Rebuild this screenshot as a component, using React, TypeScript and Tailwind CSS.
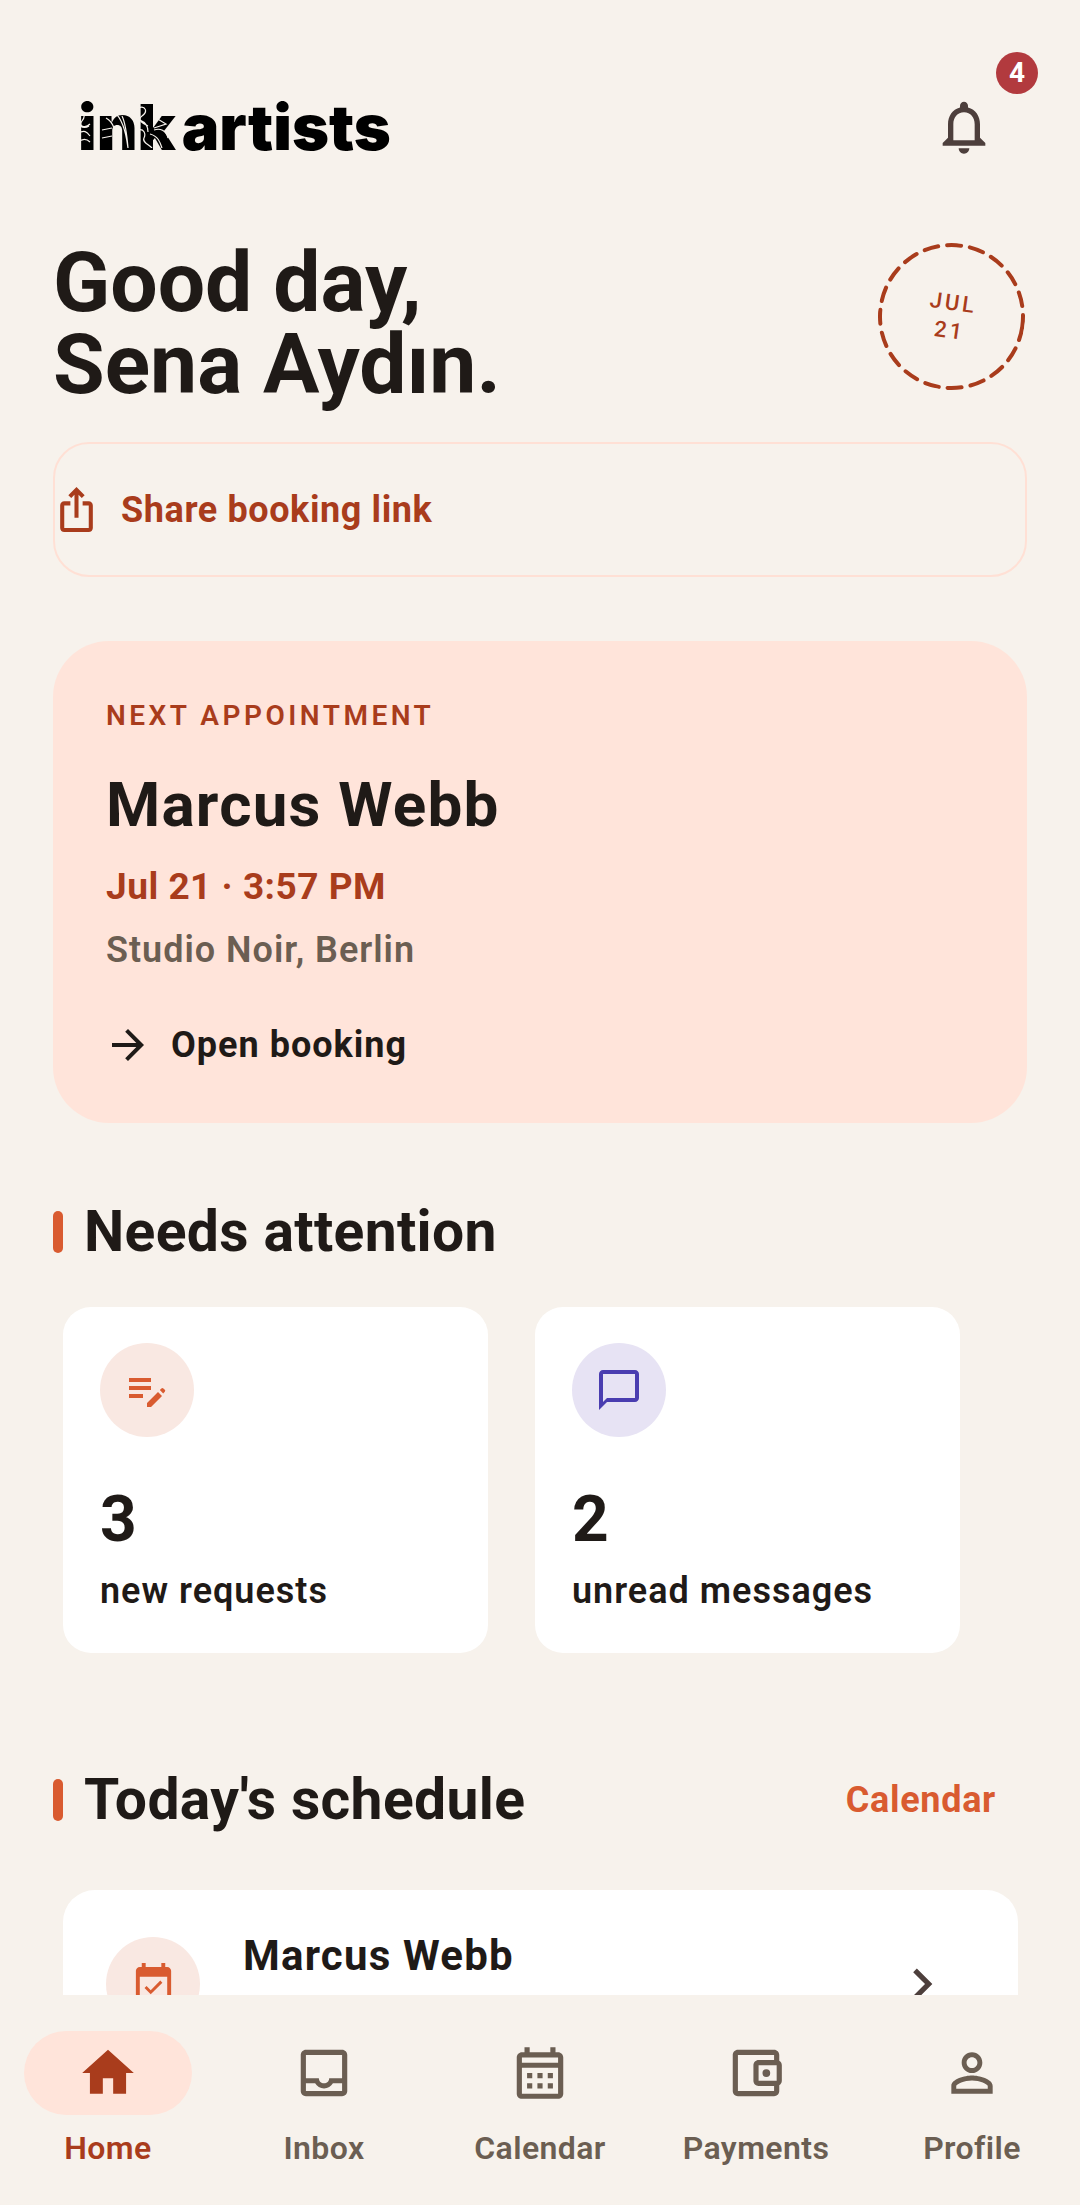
import type { ReactNode } from 'react';

const ICONS = {
  bell: 'M12 22c1.1 0 2-.9 2-2h-4c0 1.1.9 2 2 2zm6-6v-5c0-3.07-1.63-5.64-4.5-6.32V4c0-.83-.67-1.5-1.5-1.5s-1.5.67-1.5 1.5v.68C7.64 5.36 6 7.92 6 11v5l-2 2v1h16v-1l-2-2zm-2 1H8v-6c0-2.48 1.51-4.5 4-4.5s4 2.02 4 4.5v6z',
  share: 'M16 5l-1.42 1.42-1.59-1.59V16h-1.98V4.83L9.42 6.42 8 5l4-4 4 4zm4 5v11c0 1.1-.9 2-2 2H6c-1.11 0-2-.9-2-2V10c0-1.11.89-2 2-2h3v2H6v11h12V10h-3V8h3c1.1 0 2 .89 2 2z',
  arrow: 'M12 4l-1.41 1.41L16.17 11H4v2h12.17l-5.58 5.59L12 20l8-8z',
  editNote: 'M3 10h11v2H3zM3 6h11v2H3zM3 14h7v2H3zM12 20.5v-2L17.5 13l2 2-5.5 5.5zM18.4 12l.8-.8a.7.7 0 0 1 1 0l.7.7a.7.7 0 0 1 0 1l-.8.8z',
  chat: 'M20 2H4c-1.1 0-2 .9-2 2v18l4-4h14c1.1 0 2-.9 2-2V4c0-1.1-.9-2-2-2zm0 14H6l-2 2V4h16v12z',
  event: 'M16.53 11.06L15.47 10l-4.88 4.88-2.12-2.12-1.06 1.06L10.59 17l5.94-5.94zM19 3h-1V1h-2v2H8V1H6v2H5c-1.11 0-1.99.9-1.99 2L3 19c0 1.1.89 2 2 2h14c1.1 0 2-.9 2-2V5c0-1.1-.9-2-2-2zm0 16H5V8h14v11z',
  chevron: 'M10 6L8.59 7.41 13.17 12l-4.58 4.59L10 18l6-6z',
  home: 'M10 20v-6h4v6h5v-8h3L12 3 2 12h3v8z',
  inbox: 'M19 3H5c-1.1 0-2 .9-2 2v14c0 1.1.9 2 2 2h14c1.1 0 2-.9 2-2V5c0-1.1-.9-2-2-2zm0 16H5v-3h3.56c.69 1.19 1.97 2 3.45 2s2.75-.81 3.45-2H19v3zm0-5h-4.99c0 1.1-.9 2-2 2s-2-.9-2-2H5V5h14v9z',
  calendar: 'M19 4h-1V2h-2v2H8V2H6v2H5c-1.1 0-2 .9-2 2v14c0 1.1.9 2 2 2h14c1.1 0 2-.9 2-2V6c0-1.1-.9-2-2-2zm0 16H5V10h14v10zm0-12H5V6h14v2zM7 12h2v2H7zm4 0h2v2h-2zm4 0h2v2h-2zm-8 4h2v2H7zm4 0h2v2h-2zm4 0h2v2h-2z',
  wallet: 'M21 7.28V5c0-1.1-.9-2-2-2H5c-1.11 0-2 .9-2 2v14c0 1.1.89 2 2 2h14c1.1 0 2-.9 2-2v-2.28c.59-.35 1-.98 1-1.72V9c0-.74-.41-1.38-1-1.72zM20 9v6h-7V9h7zM5 19V5h14v2h-6c-1.1 0-2 .9-2 2v6c0 1.1.9 2 2 2h6v2H5zm11-8.5a1.5 1.5 0 1 0 0 3 1.5 1.5 0 0 0 0-3z',
  person: 'M12 5.9c1.16 0 2.1.94 2.1 2.1s-.94 2.1-2.1 2.1S9.9 9.16 9.9 8s.94-2.1 2.1-2.1m0 9c2.97 0 6.1 1.46 6.1 2.1v1.1H5.9V17c0-.64 3.13-2.1 6.1-2.1M12 4C9.79 4 8 5.79 8 8s1.79 4 4 4 4-1.79 4-4-1.79-4-4-4zm0 9c-2.67 0-8 1.34-8 4v3h16v-3c0-2.66-5.33-4-8-4z',
};

function Icon({ d, className }: { d: string; className: string }) {
  return (
    <svg viewBox="0 0 24 24" fill="currentColor" className={`shrink-0 ${className}`}>
      <path d={d} />
    </svg>
  );
}

function Logo() {
  return (
    <div className="flex items-baseline font-['Inter',sans-serif] text-[63px] leading-[60px] font-black text-black">
      <span className="relative mr-[6px]">
        ink
        <svg viewBox="0 0 100 44" fill="none" className="absolute bottom-[9px] left-0 h-[44px] w-[100px]" stroke="#f7f2ec" strokeWidth="1.2">
          <path d="M0 10c6-4 8 2 4 7s3 8 8 3M0 30c6-5 9-2 12 2M0 38c5-4 9-3 12 0M2 22c3 2 6 2 9 0" />
          <path d="M28 14c8 4 10 14 12 30M36 8c8 6 12 20 14 36M24 26l10-2M24 34l10-2M44 12c4 8 5 20 6 32" />
          <path d="M60 4c8-3 10 4 4 8s2 8 6 10M60 26c6-2 8 4 6 8s4 6 8 10M72 30c8 2 10 8 12 14M78 14l10 6-12 4M76 26c6-2 12 0 14 8M62 16c5 2 8 6 8 12" />
        </svg>
      </span>
      <span>artists</span>
    </div>
  );
}

function SectionTitle({ children }: { children: ReactNode }) {
  return (
    <div className="flex items-center gap-[21px]">
      <div className="h-[42px] w-[10px] rounded-full bg-[#d95b30]" />
      <h2 className="text-[57px] leading-[66px] font-bold tracking-[0.35px] text-[#1f1a17]">{children}</h2>
    </div>
  );
}

function AttentionCard({ icon, circle, iconColor, count, label }: { icon: string; circle: string; iconColor: string; count: string; label: string }) {
  return (
    <div className="h-[346px] w-[425px] rounded-[28px] bg-white px-[37px] pt-[36px]">
      <div className={`flex h-[94px] w-[94px] items-center justify-center rounded-full ${circle}`}>
        <Icon d={icon} className={`h-[48px] w-[48px] ${iconColor}`} />
      </div>
      <div className="mt-[45px] text-[64px] leading-[75px] font-bold text-[#1f1a17]">{count}</div>
      <div className="mt-[13px] text-[36px] leading-[42px] font-semibold tracking-[1px] text-[#1f1a17]">{label}</div>
    </div>
  );
}

const NAV_ITEMS = [
  { label: 'Home', icon: ICONS.home, active: true },
  { label: 'Inbox', icon: ICONS.inbox, active: false },
  { label: 'Calendar', icon: ICONS.calendar, active: false },
  { label: 'Payments', icon: ICONS.wallet, active: false },
  { label: 'Profile', icon: ICONS.person, active: false },
];

function BottomNav() {
  return (
    <nav className="flex h-[210px] shrink-0 bg-[#f7f2ec] px-0 pt-[36px]">
      {NAV_ITEMS.map((item) => (
        <div key={item.label} className="flex w-[216px] flex-col items-center">
          <div className={`flex h-[84px] w-[168px] items-center justify-center rounded-full ${item.active ? 'bg-[#ffe4da] text-[#a93c1c]' : 'text-[#6b5e52]'}`}>
            <Icon d={item.icon} className="h-[62px] w-[62px]" />
          </div>
          <span className={`mt-[13px] text-[32px] leading-[40px] font-semibold tracking-[0.4px] ${item.active ? 'text-[#a93c1c]' : 'text-[#6b5e52]'}`}>{item.label}</span>
        </div>
      ))}
    </nav>
  );
}

export default function App() {
  return (
    <div className="flex h-[2205px] w-[1080px] flex-col overflow-hidden bg-[#f7f2ec] font-['Roboto',sans-serif]">
      <main className="min-h-0 flex-1 overflow-hidden">
        <header className="relative flex h-[160px] items-center justify-between pt-[94px] pr-[84px] pl-[78px]">
          <Logo />
          <Icon d={ICONS.bell} className="h-[64px] w-[64px] text-[#4d3f3c]" />
          <span className="absolute top-[52px] right-[42px] flex h-[42px] w-[42px] items-center justify-center rounded-full bg-[#b23a3e] text-[28px] font-bold text-white">4</span>
        </header>

        <section className="flex items-start justify-between pr-[55px] pl-[53px]">
          <h1 className="mt-[82px] text-[84px] leading-[82px] font-bold text-[#1f1a17]">
            Good day,
            <br />
            Sena Aydın.
          </h1>
          <div className="relative mt-[83px] flex h-[147px] w-[147px] rotate-[8deg] flex-col items-center justify-center text-[22px] leading-[28px] font-medium tracking-[3px] text-[#a93c1c]">
            <svg viewBox="0 0 147 147" fill="none" className="absolute inset-0 h-[147px] w-[147px]">
              <circle cx="73.5" cy="73.5" r="71.5" stroke="currentColor" strokeWidth="4" strokeLinecap="round" strokeDasharray="14 9" />
            </svg>
            <span>JUL</span>
            <span>21</span>
          </div>
        </section>

        <button className="mx-[53px] mt-[36px] flex h-[135px] w-[974px] items-center gap-[20px] rounded-[36px] border-2 border-[#ffe0d5] text-[36px] font-bold tracking-[0.6px] text-[#a93c1c]">
          <Icon d={ICONS.share} className="ml-[-3px] h-[49px] w-[49px]" />
          Share booking link
        </button>

        <section className="mx-[53px] mt-[64px] h-[482px] rounded-[56px] bg-[#ffe4da] pt-[57px] pl-[53px]">
          <div className="text-[28px] leading-[36px] font-semibold tracking-[3.5px] text-[#a93c1c]">NEXT APPOINTMENT</div>
          <div className="mt-[35px] text-[62px] leading-[72px] font-bold tracking-[1.2px] text-[#1f1a17]">Marcus Webb</div>
          <div className="mt-[24px] text-[37px] leading-[44px] font-bold tracking-[0.5px] text-[#a93c1c]">Jul 21 · 3:57 PM</div>
          <div className="mt-[20px] text-[36px] leading-[42px] font-semibold tracking-[1px] text-[#6b5e52]">Studio Noir, Berlin</div>
          <div className="mt-[50px] flex items-center gap-[19px] text-[36px] leading-[42px] font-bold tracking-[1px] text-[#1f1a17]">
            <Icon d={ICONS.arrow} className="ml-[-2px] h-[48px] w-[48px]" />
            Open booking
          </div>
        </section>

        <section className="mt-[76px] pl-[53px]">
          <SectionTitle>Needs attention</SectionTitle>
          <div className="mt-[42px] ml-[10px] flex gap-[47px]">
            <AttentionCard icon={ICONS.editNote} circle="bg-[#f9e8e2]" iconColor="text-[#d95b30]" count="3" label="new requests" />
            <AttentionCard icon={ICONS.chat} circle="bg-[#e7e3f4]" iconColor="text-[#4a3db0]" count="2" label="unread messages" />
          </div>
        </section>

        <section className="mt-[114px] pr-[84px] pl-[53px]">
          <div className="flex items-center justify-between">
            <SectionTitle>Today's schedule</SectionTitle>
            <span className="text-[36px] font-bold tracking-[0.7px] text-[#d95b30]">Calendar</span>
          </div>
          <div className="mt-[57px] mr-[-22px] ml-[10px] flex h-[200px] rounded-[32px] bg-white pt-[47px] pr-[65px] pl-[43px]">
            <div className="flex h-[94px] w-[94px] items-center justify-center rounded-full bg-[#f9e8e2]">
              <Icon d={ICONS.event} className="h-[47px] w-[47px] text-[#d95b30]" />
            </div>
            <div className="mt-[-6px] ml-[43px] flex-1 text-[42px] leading-[50px] font-bold tracking-[1.2px] text-[#1f1a17]">Marcus Webb</div>
            <Icon d={ICONS.chevron} className="mt-[16px] h-[62px] w-[62px] text-[#4d3f3c]" />
          </div>
        </section>
      </main>
      <BottomNav />
    </div>
  );
}
